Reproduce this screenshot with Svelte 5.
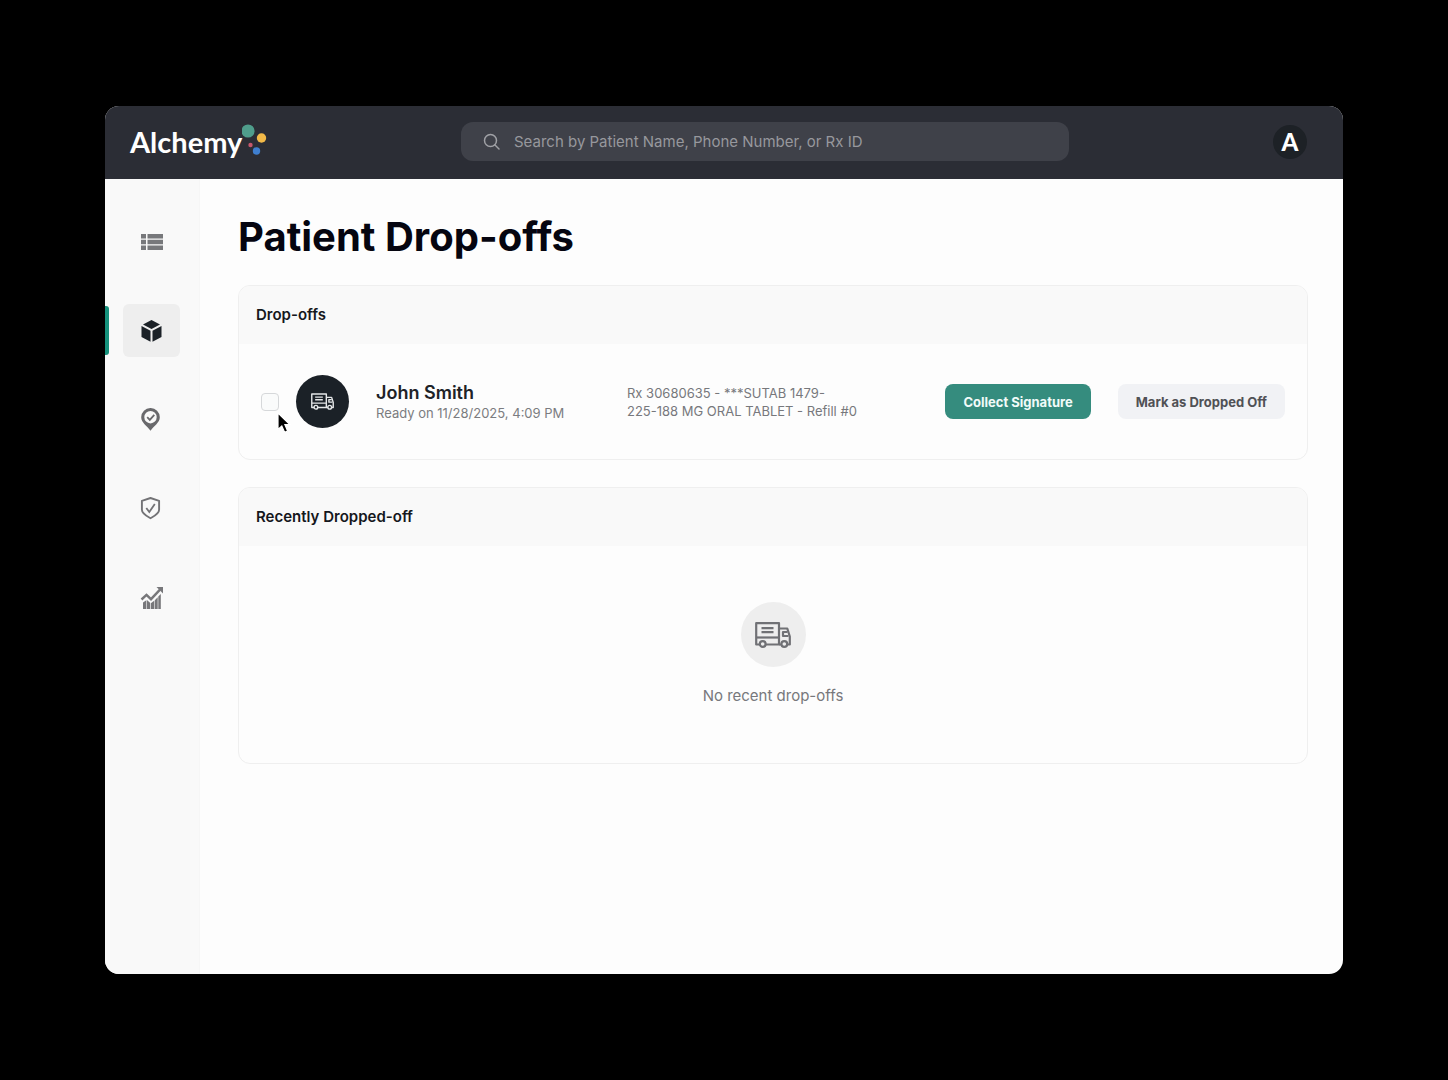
<script>
  const nav = [
    { id: 'list', label: 'Worklist' },
    { id: 'box', label: 'Drop-offs' },
    { id: 'pin', label: 'Deliveries' },
    { id: 'shield', label: 'Compliance' },
    { id: 'chart', label: 'Reports' }
  ];
  let active = $state('box');
  let query = $state('');
  let selected = $state(false);
</script>

{#snippet truck(size)}
  <svg class={size} viewBox="0 0 36 26" fill="none" stroke="currentColor" stroke-linejoin="round" aria-hidden="true">
    <path d="M4.800 22.500H1.200V1.200H24v21.300H10.600" />
    <path d="M24 6.500h8.300l2.500 8v8h-2.600M26.400 22.500H24" />
    <path d="M1.200 15.500H24" />
    <path d="M6.500 6.200h12M6.500 10.200h12" />
    <path d="M33.500 14h-5.500v-4h4.500" />
    <circle cx="7.700" cy="22" r="2.900" />
    <circle cx="29.300" cy="22" r="2.900" />
  </svg>
{/snippet}

<div class="window">
  <header>
    <a class="logo" href="#home">
      <span>Alchemy</span>
      <svg viewBox="0 0 27 38" aria-hidden="true">
        <circle cx="6" cy="8" r="6.600" fill="#4f9d8b" />
        <circle cx="19.500" cy="15" r="4.700" fill="#f2b948" />
        <circle cx="8.500" cy="22" r="2.200" fill="#c4576c" />
        <circle cx="14.500" cy="28" r="3.700" fill="#3f7fd0" />
      </svg>
    </a>
    <label class="search">
      <svg viewBox="0 0 18 18" fill="none" stroke="currentColor" stroke-width="1.500" stroke-linecap="round" aria-hidden="true">
        <circle cx="7.500" cy="7.500" r="6" />
        <path d="M12 12l4 4" />
      </svg>
      <input type="search" bind:value={query} aria-label="Search patients" placeholder="Search by Patient Name, Phone Number, or Rx ID" />
    </label>
    <button class="avatar" aria-label="Account"><span>A</span></button>
  </header>

  <div class="body">
    <nav aria-label="Main">
      {#each nav as item}
        <a href={'#' + item.id} class:active={active === item.id} aria-label={item.label} onclick={() => (active = item.id)}>
          <svg viewBox="0 0 24 24" aria-hidden="true">
            {#if item.id === 'list'}
              <path fill="#77787b" d="M1 4h5v4.500H1zM7.500 4H23v4.500H7.500zM1 9.800h5v4.400H1zM7.500 9.800H23v4.400H7.500zM1 15.500h5V20H1zM7.500 15.500H23V20H7.500z" />
            {:else if item.id === 'box'}
              <path fill="#1b2127" d="M11.500 1l8.500 4.400-8.500 4.500L3 5.400zM1.500 7l9 4.700v11l-9-4.800zM21.500 7l-9 4.700v11l9-4.800z" />
            {:else if item.id === 'pin'}
              <path fill="#69696c" fill-rule="evenodd" d="M10.500 0a9.200 9.200 0 0 0-9.300 9.200c0 5.500 5.800 8.500 9.300 13.500 3.500-5 9.300-8 9.300-13.500A9.200 9.200 0 0 0 10.500 0zm0 3a6.200 6.200 0 1 1 0 12.400 6.200 6.200 0 0 1 0-12.400z" />
              <path fill="none" stroke="#69696c" stroke-width="1.800" d="M7.200 9.200l2.600 2.700 4.500-5" />
            {:else if item.id === 'shield'}
              <path fill="none" stroke="#737376" stroke-width="1.900" stroke-linejoin="round" d="M10.500 1l8.600 2.800v9c0 4-4.600 6.200-8.600 8.400-4-2.200-8.600-4.400-8.600-8.400v-9z" />
              <path fill="none" stroke="#737376" stroke-width="1.800" d="M6.300 11l3 4 5.500-8" />
            {:else}
              <path fill="#77777a" d="M3 16.500l3.300-2.300V23H3zM6.900 14l3.200 2.800V23H6.900zM10.800 17.300l3.400-2.500V23h-3.400zM14.800 14.200l2.900-3V23h-2.900zM18.300 10.500l2.500-2.500V23h-2.500z" />
              <path fill="none" stroke="#77777a" stroke-width="2.400" d="M1.500 13.500l5-4.600 4.500 4.300 9-9.500" />
              <path fill="#77777a" d="M16.500 1H23v6.500z" />
            {/if}
          </svg>
        </a>
      {/each}
    </nav>

    <main>
      <h1>Patient Drop-offs</h1>

      <section>
        <h2>Drop-offs</h2>
        <div class="row">
          <div class="pick">
            <input type="checkbox" bind:checked={selected} aria-label="Select John Smith" />
            <svg class="cursor" viewBox="0 0 16 24" aria-hidden="true">
              <path fill="#000" stroke="#fff" stroke-width="1.200" d="M1 1v16.500l3.800-3.600 2.800 6.400 3-1.300-2.700-6.300h5.200z" />
            </svg>
          </div>
          <div class="badge">{@render truck('small')}</div>
          <div class="patient">
            <strong>John Smith</strong>
            <span>Ready on 11/28/2025, 4:09 PM</span>
          </div>
          <p class="rx">Rx 30680635 - ***SUTAB 1479-<br />225-188 MG ORAL TABLET - Refill #0</p>
          <div class="actions">
            <button class="primary">Collect Signature</button>
            <button class="secondary">Mark as Dropped Off</button>
          </div>
        </div>
      </section>

      <section>
        <h2>Recently Dropped-off</h2>
        <div class="empty">
          <div class="halo">{@render truck('large')}</div>
          <p>No recent drop-offs</p>
        </div>
      </section>
    </main>
  </div>
</div>

<style>
  :global(body) {
    background: #000;
  }
  * {
    box-sizing: border-box;
  }
  .window {
    display: flex;
    flex-direction: column;
    min-height: calc(100vh - 212px);
    margin: 106px 105px;
    border-radius: 14px;
    overflow: hidden;
    background: #fdfdfd;
    color: #15171c;
    font-family: Inter, 'Liberation Sans', sans-serif;
  }
  header {
    display: grid;
    grid-template-columns: 331fr 608fr 238fr;
    align-items: center;
    padding: 16px 36px 18px 25px;
    background: #2b2d35;
  }
  .logo {
    display: flex;
    align-items: center;
    height: 38px;
    color: #fff;
    text-decoration: none;
    font: 700 29px/38px Lato, sans-serif;
  }
  .logo svg {
    width: 27px;
    height: 38px;
  }
  .search {
    display: flex;
    align-items: center;
    gap: 13px;
    height: 39px;
    padding: 0 22px;
    border-radius: 12px;
    background: #3f4149;
    color: #a0a1a6;
  }
  .search svg {
    flex: none;
    width: 18px;
    height: 18px;
  }
  .search input {
    flex: 1;
    min-width: 0;
    padding: 0;
    border: 0;
    outline: 0;
    background: none;
    color: #fff;
    font: 400 15px/20px Inter, sans-serif;
  }
  .search input::placeholder {
    color: #97989d;
    opacity: 1;
  }
  .avatar {
    justify-self: end;
    display: grid;
    place-items: center;
    width: 34px;
    height: 34px;
    padding: 0;
    border: 0;
    border-radius: 50%;
    background: #1d2126;
    color: #fff;
    font: 900 24px/24px Lato, sans-serif;
  }
  .body {
    flex: 1;
    display: flex;
  }
  nav {
    flex: none;
    display: flex;
    flex-direction: column;
    gap: 36px;
    width: 95px;
    padding: 36px 19px 36px 18px;
    background: #f9f9f9;
    border-right: 1px solid #f6f6f6;
  }
  nav a {
    position: relative;
    display: grid;
    place-items: center;
    height: 53px;
    border-radius: 6px;
  }
  nav a.active {
    background: #eee;
  }
  nav a.active::before {
    content: '';
    position: absolute;
    left: -18px;
    top: 2px;
    bottom: 2px;
    width: 4px;
    border-radius: 0 3px 3px 0;
    background: #16917c;
  }
  nav svg {
    width: 24px;
    height: 24px;
  }
  main {
    flex: 1;
    min-width: 0;
    padding: 34px 35px 34px 38px;
  }
  h1 {
    margin: 0 0 24px;
    color: #050510;
    font-size: 40px;
    line-height: 48px;
    font-weight: 700;
  }
  section {
    margin-bottom: 27px;
    border: 1px solid #efefef;
    border-radius: 12px;
    overflow: hidden;
  }
  h2 {
    margin: 0;
    padding: 18px 17px;
    background: #f9f9f9;
    font-size: 15px;
    line-height: 22px;
    font-weight: 600;
  }
  .row {
    display: flex;
    align-items: center;
    min-height: 115px;
    padding: 0 22px;
  }
  .pick {
    position: relative;
    flex: none;
    width: 18px;
    height: 18px;
    margin-right: 17px;
  }
  .pick input {
    appearance: none;
    display: block;
    width: 18px;
    height: 18px;
    margin: 0;
    border: 1px solid #d6d8da;
    border-radius: 4px;
    background: #fafbfb;
  }
  .pick input:checked {
    background: #358c7e;
  }
  .cursor {
    position: absolute;
    z-index: 1;
    left: 16px;
    top: 19px;
    width: 16px;
    height: 24px;
    pointer-events: none;
  }
  .badge {
    flex: none;
    display: grid;
    place-items: center;
    width: 53px;
    height: 53px;
    margin-right: 27px;
    border-radius: 50%;
    background: #1b2127;
    color: #e4e6e7;
  }
  .small {
    width: 23px;
    height: 17px;
    stroke-width: 2.2;
  }
  .large {
    width: 36px;
    height: 26px;
    stroke-width: 2.2;
  }
  .patient {
    flex: 0 1 251px;
    display: flex;
    flex-direction: column;
  }
  .patient strong {
    color: #202227;
    font-size: 18px;
    line-height: 22px;
    font-weight: 600;
  }
  .patient span {
    color: #7b7c80;
    font-size: 13px;
    line-height: 18px;
  }
  .rx {
    margin: 0;
    color: #77787c;
    font-size: 13px;
    line-height: 18px;
  }
  .actions {
    display: flex;
    gap: 27px;
    margin-left: auto;
  }
  .actions button {
    height: 35px;
    padding: 0 18px;
    border: 0;
    border-radius: 8px;
    font: 700 13px/18px Inter, sans-serif;
    white-space: nowrap;
  }
  .primary {
    background: #358c7e;
    color: #f1fbf9;
  }
  .secondary {
    background: #f1f2f5;
    color: #505155;
  }
  .empty {
    display: flex;
    flex-direction: column;
    align-items: center;
    gap: 18px;
    padding: 56px 0;
  }
  .halo {
    display: grid;
    place-items: center;
    width: 65px;
    height: 65px;
    border-radius: 50%;
    background: #eee;
    color: #707175;
  }
  .empty p {
    margin: 0;
    color: #77787c;
    font-size: 15px;
    line-height: 22px;
  }
</style>
